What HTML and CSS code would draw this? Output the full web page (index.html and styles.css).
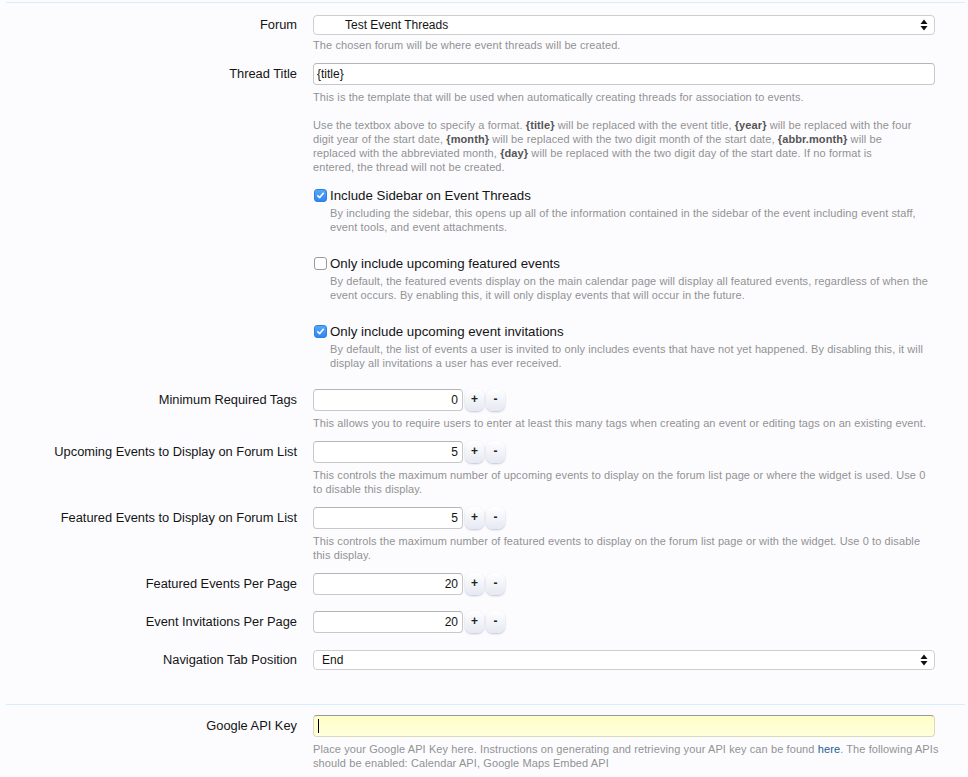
FILE: index.html
```html
<!DOCTYPE html>
<html>
<head>
<meta charset="utf-8">
<link rel="stylesheet" href="styles.css">
</head>
<body>
<div class="page">
  <div class="sep sep-top"></div>

  <div class="row r-forum">
    <div class="label lab-sel">Forum</div>
    <div class="ctrl">
      <div class="select"><span class="sel-text indent">Test Event Threads</span><svg class="arrows" width="8" height="12" viewBox="0 0 8 12"><path d="M4 0.5 L7.5 5 L0.5 5 Z M4 11.5 L7.5 7 L0.5 7 Z" fill="#111"/></svg></div>
      <p class="explain ex-sel">The chosen forum will be where event threads will be created.</p>
    </div>
  </div>

  <div class="row r-std">
    <div class="label lab-inp">Thread Title</div>
    <div class="ctrl">
      <div class="input text-input">{title}</div>
      <p class="explain">This is the template that will be used when automatically creating threads for association to events.</p>
      <p class="explain ex-gap nw">Use the textbox above to specify a format. <b>{title}</b> will be replaced with the event title, <b>{year}</b> will be replaced with the four<br>digit year of the start date, <b>{month}</b> will be replaced with the two digit month of the start date, <b>{abbr.month}</b> will be<br>replaced with the abbreviated month, <b>{day}</b> will be replaced with the two digit day of the start date. If no format is<br>entered, the thread will not be created.</p>
    </div>
  </div>

  <div class="row r-chk1">
    <div class="label"></div>
    <div class="ctrl">
      <div class="check-line"><span class="cb on"><svg width="9" height="9" viewBox="0 0 9 9"><path d="M1.8 4.8 L3.7 6.6 L7.3 2.3" fill="none" stroke="#fff" stroke-width="1.6" stroke-linecap="round" stroke-linejoin="round"/></svg></span><span>Include Sidebar on Event Threads</span></div>
      <p class="explain chk-ex nw">By including the sidebar, this opens up all of the information contained in the sidebar of the event including event staff,<br>event tools, and event attachments.</p>
    </div>
  </div>

  <div class="row r-chk">
    <div class="label"></div>
    <div class="ctrl">
      <div class="check-line"><span class="cb off"></span><span>Only include upcoming featured events</span></div>
      <p class="explain chk-ex nw">By default, the featured events display on the main calendar page will display all featured events, regardless of when the<br>event occurs. By enabling this, it will only display events that will occur in the future.</p>
    </div>
  </div>

  <div class="row r-chk">
    <div class="label"></div>
    <div class="ctrl">
      <div class="check-line"><span class="cb on"><svg width="9" height="9" viewBox="0 0 9 9"><path d="M1.8 4.8 L3.7 6.6 L7.3 2.3" fill="none" stroke="#fff" stroke-width="1.6" stroke-linecap="round" stroke-linejoin="round"/></svg></span><span>Only include upcoming event invitations</span></div>
      <p class="explain chk-ex nw">By default, the list of events a user is invited to only includes events that have not yet happened. By disabling this, it will<br>display all invitations a user has ever received.</p>
    </div>
  </div>

  <div class="row r-tags">
    <div class="label lab-inp">Minimum Required Tags</div>
    <div class="ctrl">
      <div class="spin"><div class="input num">0</div><span class="btn">+</span><span class="btn">-</span></div>
      <p class="explain nw">This allows you to require users to enter at least this many tags when creating an event or editing tags on an existing event.</p>
    </div>
  </div>

  <div class="row r-std">
    <div class="label lab-inp">Upcoming Events to Display on Forum List</div>
    <div class="ctrl">
      <div class="spin"><div class="input num">5</div><span class="btn">+</span><span class="btn">-</span></div>
      <p class="explain nw">This controls the maximum number of upcoming events to display on the forum list page or where the widget is used. Use 0<br>to disable this display.</p>
    </div>
  </div>

  <div class="row r-std">
    <div class="label lab-inp">Featured Events to Display on Forum List</div>
    <div class="ctrl">
      <div class="spin"><div class="input num">5</div><span class="btn">+</span><span class="btn">-</span></div>
      <p class="explain nw">This controls the maximum number of featured events to display on the forum list page or with the widget. Use 0 to disable<br>this display.</p>
    </div>
  </div>

  <div class="row r-std">
    <div class="label lab-inp">Featured Events Per Page</div>
    <div class="ctrl">
      <div class="spin"><div class="input num">20</div><span class="btn">+</span><span class="btn">-</span></div>
    </div>
  </div>

  <div class="row r-inv">
    <div class="label lab-inp">Event Invitations Per Page</div>
    <div class="ctrl">
      <div class="spin"><div class="input num">20</div><span class="btn">+</span><span class="btn">-</span></div>
    </div>
  </div>

  <div class="row r-nav">
    <div class="label lab-sel">Navigation Tab Position</div>
    <div class="ctrl">
      <div class="select"><span class="sel-text">End</span><svg class="arrows" width="8" height="12" viewBox="0 0 8 12"><path d="M4 0.5 L7.5 5 L0.5 5 Z M4 11.5 L7.5 7 L0.5 7 Z" fill="#111"/></svg></div>
    </div>
  </div>

  <div class="sep sep-mid"></div>

  <div class="row r-api">
    <div class="label lab-inp">Google API Key</div>
    <div class="ctrl">
      <div class="input api"><span class="caret"></span></div>
      <p class="explain nw">Place your Google API Key here. Instructions on generating and retrieving your API key can be found <a href="#">here</a>. The following APIs<br>should be enabled: Calendar API, Google Maps Embed API</p>
    </div>
  </div>
</div>
</body>
</html>
```

FILE: styles.css
```css
* { box-sizing: border-box; }
html, body { margin: 0; padding: 0; }
body {
  background: #fcfcff;
  font-family: "Liberation Sans", Arial, sans-serif;
  color: #141414;
  width: 968px;
  height: 777px;
  overflow: hidden;
}
.page { padding: 0 3px 0 6px; }
.sep { height: 1px; background: #d7edfc; width: 959px; }
.sep-top { margin-top: 2px; }
.sep-mid { margin-top: 34px; }

.row {
  display: grid;
  grid-template-columns: 291px 622px;
  column-gap: 16px;
}
.r-forum { margin-top: 12px; }
.r-std { margin-top: 11px; }
.r-chk1 { margin-top: 12px; }
.r-chk { margin-top: 20px; }
.r-tags { margin-top: 19px; }
.r-inv { margin-top: 16px; }
.r-nav { margin-top: 17px; }
.r-api { margin-top: 10px; }

.label {
  text-align: right;
  font-size: 12.85px;
}
.lab-sel { line-height: 20px; }
.lab-inp { line-height: 22px; }

.select {
  height: 20px;
  background: #fff;
  border: 1px solid #cfcfcf;
  border-radius: 4px;
  display: flex;
  align-items: center;
  justify-content: space-between;
  padding: 0 6px 0 8px;
  font-size: 12px;
}
.sel-text.indent { padding-left: 23px; }
.arrows { display: block; }

.input {
  height: 22px;
  background: #fff;
  border: 1px solid #c8c8c8;
  border-top-color: #b5b5b5;
  border-radius: 4px;
  font-size: 12px;
  line-height: 20px;
  padding: 0 3px;
}
.num { width: 150px; text-align: right; padding-right: 4px; }
.spin { display: flex; align-items: center; gap: 2px; }
.btn {
  width: 19px;
  height: 22px;
  border-radius: 7px;
  background: linear-gradient(#ffffff, #e6e9f3);
  box-shadow: 0 1px 2px rgba(80, 90, 130, 0.35);
  font-size: 12px;
  font-weight: bold;
  line-height: 21px;
  text-align: center;
  color: #222;
}
.api {
  background: linear-gradient(#ffffc8, #ffffdc);
  border-color: #d9d9c0;
  border-top-color: #9a9a9a;
  display: flex;
  align-items: center;
}
.caret { width: 1px; height: 14px; background: #000; margin-left: 1px; }

.explain {
  margin: 5px 0 0 0;
  font-size: 11px;
  letter-spacing: 0.1px;
  line-height: 14px;
  color: #929292;
}
.explain.nw { white-space: nowrap; }
.ex-sel { margin-top: 3px; }
.ex-gap { margin-top: 14px; }
.explain b { color: #555; }
.explain a { color: #176093; text-decoration: none; }
.chk-ex { margin-top: 2px; padding-left: 17px; }

.check-line {
  display: flex;
  align-items: center;
  height: 18px;
  font-size: 13.3px;
  padding-left: 1px;
}
.cb {
  width: 13px;
  height: 13px;
  border-radius: 3px;
  margin-right: 3px;
  display: flex;
  align-items: center;
  justify-content: center;
}
.cb.on { background: linear-gradient(#55a8fb, #2f86f0); border: 1px solid #2f7fe0; }
.cb.off { background: #fff; border: 1px solid #9a9a9a; }
```
